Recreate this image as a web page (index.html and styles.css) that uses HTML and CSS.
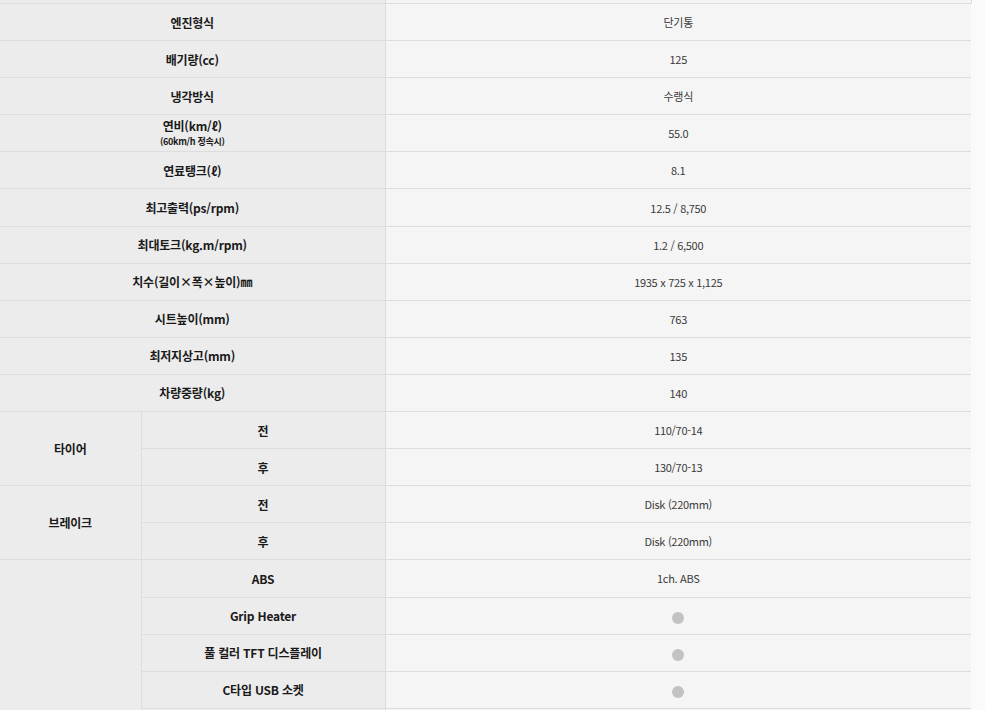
FILE: index.html
```html
<!DOCTYPE html>
<html lang="ko">
<head>
<meta charset="utf-8">
<title>제원</title>
<link rel="stylesheet" href="styles.css">
</head>
<body>
<table class="spec">
  <colgroup>
    <col class="c-group">
    <col class="c-sub">
    <col class="c-val">
  </colgroup>
  <tbody>
    <tr class="stub"><th colspan="2"></th><td class="edge"></td></tr>
    <tr><th colspan="2">엔진형식</th><td>단기통</td></tr>
    <tr><th colspan="2">배기량(cc)</th><td>125</td></tr>
    <tr><th colspan="2">냉각방식</th><td>수랭식</td></tr>
    <tr><th colspan="2" class="two"><span class="main">연비(km/ℓ)</span><span class="note">(60km/h 정속시)</span></th><td>55.0</td></tr>
    <tr><th colspan="2">연료탱크(ℓ)</th><td>8.1</td></tr>
    <tr><th colspan="2">최고출력(ps/rpm)</th><td>12.5 / 8,750</td></tr>
    <tr><th colspan="2">최대토크(kg.m/rpm)</th><td>1.2 / 6,500</td></tr>
    <tr><th colspan="2">치수(길이×폭×높이)㎜</th><td>1935 x 725 x 1,125</td></tr>
    <tr><th colspan="2">시트높이(mm)</th><td>763</td></tr>
    <tr><th colspan="2">최저지상고(mm)</th><td>135</td></tr>
    <tr><th colspan="2">차량중량(kg)</th><td>140</td></tr>
    <tr><th rowspan="2">타이어</th><th class="sub">전</th><td>110/70-14</td></tr>
    <tr><th class="sub">후</th><td>130/70-13</td></tr>
    <tr><th rowspan="2">브레이크</th><th class="sub">전</th><td>Disk (220mm)</td></tr>
    <tr><th class="sub">후</th><td>Disk (220mm)</td></tr>
    <tr><th rowspan="5"></th><th class="sub">ABS</th><td>1ch. ABS</td></tr>
    <tr><th class="sub">Grip Heater</th><td><span class="dot"></span></td></tr>
    <tr><th class="sub">풀 컬러 TFT 디스플레이</th><td><span class="dot"></span></td></tr>
    <tr><th class="sub">C타입 USB 소켓</th><td><span class="dot"></span></td></tr>
    <tr><th class="sub">&nbsp;</th><td>&nbsp;</td></tr>
  </tbody>
</table>
</body>
</html>
```

FILE: styles.css
```css
html, body {
  margin: 0;
  padding: 0;
  background: #fafafa;
}

body {
  font-family: "Noto Sans CJK KR", "Noto Sans", sans-serif;
}

.spec {
  width: 971px;
  border-collapse: collapse;
  table-layout: fixed;
}

.c-group { width: 141px; }
.c-sub { width: 244px; }
.c-val { width: 586px; }

.spec th,
.spec td {
  height: 36.1px;
  padding: 0;
  text-align: center;
  vertical-align: middle;
  border-bottom: 1px solid #dddddd;
}

.spec th {
  background: #ececec;
  color: #1a1a1a;
  font-size: 12px;
  font-weight: 700;
  letter-spacing: -0.2px;
  border-right: 1px solid #dddddd;
}

.spec td {
  background: #f5f5f5;
  color: #3a3a3a;
  font-size: 11px;
  font-weight: 400;
  letter-spacing: -0.3px;
}

.spec .stub th,
.spec .stub td {
  height: 3px;
}

.spec .stub td.edge {
  border-right: 1px solid #dddddd;
}

.main {
  display: block;
  line-height: 17px;
}

.note {
  display: block;
  font-size: 9px;
  line-height: 16px;
  letter-spacing: -0.3px;
}

.dot {
  display: inline-block;
  width: 12px;
  height: 12px;
  border-radius: 50%;
  background: #c2c2c2;
  vertical-align: middle;
}
```
